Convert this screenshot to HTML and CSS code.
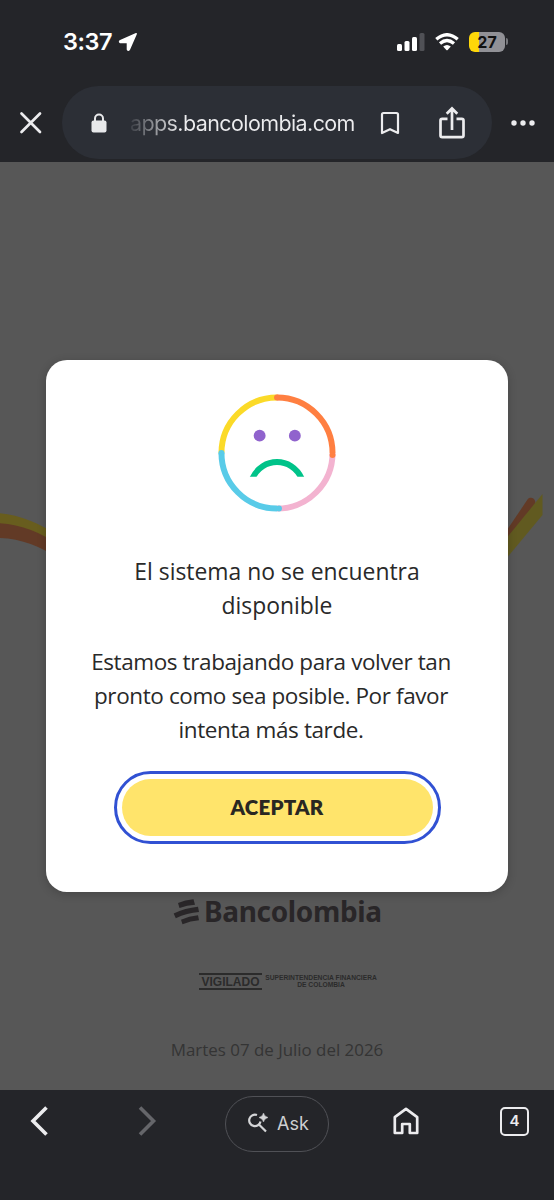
FILE: index.html
```html
<!DOCTYPE html>
<html lang="es">
<head>
<meta charset="utf-8">
<title>Bancolombia</title>
<link rel="stylesheet" href="styles.css">
</head>
<body>
<div class="phone">
  <header class="browser-top">
    <div class="status">
      <span class="clock">3:37</span>
      <svg class="location" width="20" height="20" viewBox="0 0 20 20"><path d="M18.200 1.800 11.300 17.400Q10.300 19 9.500 17.400V10.500H2.400Q.8 9.700 2.400 8.700Z" fill="#fff" stroke="#fff" stroke-width="1.600" stroke-linejoin="round"/></svg>
      <svg class="signal" width="28" height="18" viewBox="0 0 28 18"><g fill="#fff"><rect y="11" width="5" height="7" rx="1.500"/><rect x="7.500" y="8" width="5" height="10" rx="1.500"/><rect x="15" y="4" width="5" height="14" rx="1.500"/></g><rect x="22.500" width="5" height="18" rx="1.500" fill="#505156"/></svg>
      <svg class="wifi" width="24" height="18" viewBox="0 0 24 18"><g fill="none" stroke="#fff" stroke-width="3.300"><path d="M1.300 6.300Q12-2.900 22.700 6.300"/><path d="M5 10.500Q12 4.500 19 10.500"/></g><path d="M8.200 13.600Q12 10.500 15.800 13.600L12.700 17Q12 17.700 11.300 17Z" fill="#fff"/></svg>
      <div class="battery"><span>27</span></div>
      <i class="battery-tip"></i>
    </div>
    <div class="address-row">
      <svg class="close" width="24" height="24" viewBox="0 0 24 24"><path d="M2.500 2.500 21 21M21 2.500 2.500 21" stroke="#ececee" stroke-width="2.700" stroke-linecap="round"/></svg>
      <div class="address">
        <svg class="lock" width="16" height="20" viewBox="0 0 16 20"><rect x=".5" y="7.500" width="15" height="12" rx="2" fill="#e8e9eb"/><path d="M4 8.500V5.500a4 4 0 0 1 8 0V8.500" fill="none" stroke="#e8e9eb" stroke-width="2"/></svg>
        <span class="url">apps.bancolombia.com</span>
        <svg class="bookmark" width="20" height="24" viewBox="0 0 20 24"><path d="M2 22V3.500Q2 2 3.500 2H16.500Q18 2 18 3.500V22L10 18.200Z" fill="none" stroke="#ececee" stroke-width="2.200" stroke-linejoin="round"/></svg>
        <svg class="share" width="28" height="34" viewBox="0 0 28 34"><path d="M9.500 12.800H4.200Q2.500 12.800 2.500 14.500V29.500Q2.500 31.200 4.200 31.200H23.800Q25.500 31.200 25.500 29.500V14.500Q25.500 12.800 23.800 12.800H18.500M14 24V3M8.700 7.800 14 2.500 19.300 7.800" fill="none" stroke="#ececee" stroke-width="2.700"/></svg>
      </div>
      <svg class="more" width="26" height="8" viewBox="0 0 26 8"><g fill="#ececee"><circle cx="4" cy="4" r="2.700"/><circle cx="13" cy="4" r="2.700"/><circle cx="22" cy="4" r="2.700"/></g></svg>
    </div>
  </header>

  <main class="page">
    <svg class="ribbon" width="554" height="90" viewBox="0 0 554 90">
      <path d="M-4 36Q25 39 60 61V80Q30 58-4 58Z" fill="#623a26"/>
      <path d="M-4 33Q28 35 60 57V66Q30 44-4 43Z" fill="#685d1e"/>
      <path d="M500 68 531 22" stroke="#623a26" stroke-width="8.500" stroke-linecap="round"/>
      <path d="M500 66 542.500 14V35L500 86Z" fill="#615a20"/>
    </svg>
    <div class="brand">
      <svg width="27" height="26" viewBox="0 0 27 26"><g fill="#292628"><path d="M5 4Q12 1 20.500 .3L22 5.700Q14 6.300 6.500 9Z"/><path d="M.7 14.500Q12 9 25 7.700L26 13Q14 13.700 2.800 19.300Z"/><path d="M8 20.700Q16 17 25 16.200L26 21.200Q17.500 21.800 9.500 25.300Z"/></g></svg>
      <span>Bancolombia</span>
    </div>
    <div class="regulator">
      <strong>VIGILADO</strong>
      <span>SUPERINTENDENCIA FINANCIERA<br>DE COLOMBIA</span>
    </div>
    <p class="date">Martes 07 de Julio del 2026</p>

    <section class="dialog" role="dialog">
      <svg class="face" width="120" height="120" viewBox="-.5 -.5 121 121">
        <g fill="none" stroke-width="6">
          <path d="M116 60A56 56 0 0 1 60 116" stroke="#f3b3d0"/>
          <path d="M4 60A56 56 0 0 1 60 4" stroke="#fbda28"/>
          <path d="M4 60A56 56 0 0 0 60 116" stroke="#59cbe8"/>
          <path d="M60 4A56 56 0 0 1 116 60" stroke="#ff7f41"/>
          <path d="M35 86C45 63.500 75 63.500 85 86" stroke="#00c389"/>
        </g>
        <g fill="#9063cd"><circle cx="42.500" cy="42.500" r="6"/><circle cx="78" cy="42.500" r="6"/></g>
        <circle cx="60" cy="4" r="3" fill="#ff7f41"/><circle cx="116" cy="62" r="3" fill="#ff7f41"/><circle cx="4" cy="60" r="3" fill="#59cbe8"/><circle cx="62" cy="116" r="3" fill="#59cbe8"/>
        <path d="M28 84h64v8H28Z" fill="#fff"/>
      </svg>
      <h1>El sistema no se encuentra<br>disponible</h1>
      <p class="message">Estamos trabajando para volver tan<br>pronto como sea posible. Por favor<br>intenta más tarde.</p>
      <button class="accept">ACEPTAR</button>
    </section>
  </main>

  <nav class="browser-bottom">
    <svg class="back" width="20" height="32" viewBox="0 0 20 32"><path d="M17.500 2.500 4 16 17.500 29.500" fill="none" stroke="#ececee" stroke-width="3.600"/></svg>
    <svg class="forward" width="20" height="32" viewBox="0 0 20 32"><path d="M3 2.500 16.500 16 3 29.500" fill="none" stroke="#65666a" stroke-width="3.600"/></svg>
    <div class="ask">
      <svg width="20" height="20" viewBox="0 0 20 20"><path d="M9 2.100A5.700 5.700 0 1 0 12.500 8.500M11.200 11.700 18 18.500" fill="none" stroke="#d4d5d7" stroke-width="2.200"/><path d="M15.500 0Q16.200 3.500 20 4.500 16.200 5.500 15.500 9 14.800 5.500 11 4.500 14.800 3.500 15.500 0Z" fill="#d4d5d7" stroke="#d4d5d7" stroke-width=".5"/></svg>
      <span>Ask</span>
    </div>
    <svg class="home" width="26" height="28" viewBox="0 0 26 28"><path d="M1.800 25V10.200L13 1.800 24.200 10.200V26H16.800V17H9.200V26H1.800Z" fill="none" stroke="#ececee" stroke-width="2.700" stroke-linejoin="round"/></svg>
    <div class="tabs">4</div>
  </nav>
</div>
</body>
</html>
```
FILE: styles.css
```css
* { box-sizing: border-box; }
body { margin: 0; background: #242529; }
svg { display: block; flex: none; }
.phone { width: 554px; height: 1200px; display: flex; flex-direction: column; overflow: hidden; background: #242529; }

.browser-top { flex: none; height: 162px; color: #ececee; }
.status { height: 86px; padding: 0 0 3px 63px; display: flex; align-items: center; }
.clock { width: 51px; color: #fff; font: 600 23.5px/28px Inter, sans-serif; letter-spacing: -.5px; white-space: nowrap; }
.location { margin-left: 4px; }
.signal { margin-left: 259px; }
.wifi { margin-left: 10px; }
.battery { width: 36px; height: 20px; margin-left: 10px; border-radius: 6px; background: linear-gradient(90deg, #fed709 0 10px, #919196 10px); color: #111; text-align: center; font: 700 16px/20px Inter, sans-serif; }
.battery-tip { width: 2px; height: 7px; margin-left: 1px; border-radius: 0 2px 2px 0; background: #77787c; }
.address-row { height: 73px; display: flex; align-items: center; padding-left: 19px; }
.address { width: 430px; height: 73px; margin-left: 19px; padding-left: 29px; border-radius: 37px; background: #2c2f36; display: flex; align-items: center; }
.url { width: 224px; margin-left: 23px; font: 400 21.500px/30px Inter, sans-serif; letter-spacing: -.6px; white-space: nowrap; color: transparent; background: linear-gradient(90deg, #3b3e45, #ececee 50px); background-clip: text; -webkit-background-clip: text; }
.bookmark { margin-left: 26px; }
.share { margin-left: 38px; }
.more { margin-left: 18px; }

.page { position: relative; flex: none; height: 928px; padding-top: 737px; background: #575757; overflow: hidden; }
.ribbon { position: absolute; left: 0; top: 318px; }
.brand { height: 26px; padding-left: 173px; display: flex; align-items: center; gap: 4px; color: #292628; font: 700 28px/22px "Noto Sans", sans-serif; letter-spacing: -.35px; white-space: nowrap; }
.brand span { padding-bottom: 3px; }
.regulator { height: 18px; margin-top: 47px; padding-left: 199px; display: flex; align-items: center; gap: 3px; color: #2b2b2b; font-family: "Liberation Sans", sans-serif; }
.regulator strong { width: 63px; height: 17px; border: solid #2b2b2b; border-width: 2px 0; font-size: 12px; line-height: 14px; text-align: center; }
.regulator span { width: 112px; font-size: 6.700px; line-height: 7.500px; font-weight: 700; text-align: center; white-space: nowrap; }
.date { margin: 46px 0 0; text-align: center; font: 400 16.900px/28px "Open Sans", sans-serif; color: #343434; white-space: nowrap; }

.dialog { position: absolute; left: 46px; top: 198px; width: 462px; height: 532px; padding-top: 33px; border-radius: 21px; background: #fff; color: #292929; display: flex; flex-direction: column; align-items: center; text-align: center; font-family: "Open Sans", sans-serif; box-shadow: 0 2px 10px #0003; white-space: nowrap; }
.dialog h1 { margin: 42px 0 0; font-size: 22.900px; line-height: 34px; font-weight: 500; }
.message { width: 450px; margin: 22px 0 0; padding-right: 12px; font-size: 22.500px; line-height: 34px; letter-spacing: -.4px; }
.accept { width: 327px; height: 73px; margin-top: 24px; padding: 5px; border: 3px solid #3151d3; border-radius: 37px; background: linear-gradient(#ffe46b, #ffe46b) content-box; color: #292722; font: 800 20.500px/57px Lato, sans-serif; letter-spacing: .25px; }
.accept { background: none; position: relative; z-index: 0; }
.accept::before { content: ""; position: absolute; inset: 5px; z-index: -1; border-radius: 29px; background: #ffe46b; }

.browser-bottom { flex: none; height: 110px; display: flex; align-items: flex-start; color: #ececee; font-family: Inter, sans-serif; }
.back { margin: 15px 0 0 29px; }
.forward { margin: 15px 0 0 88px; }
.ask { width: 104px; height: 56px; margin: 6px 0 0 68px; padding: 0 0 2px 22px; border: 1px solid #505156; border-radius: 28px; display: flex; align-items: center; gap: 9px; color: #cfd0d2; font-size: 18px; }
.home { margin: 17px 0 0 64px; }
.tabs { width: 29px; height: 29px; margin: 17px 0 0 81px; border: 2.500px solid #ececee; border-radius: 5px; text-align: center; font-size: 15px; line-height: 24px; font-weight: 600; }
```
